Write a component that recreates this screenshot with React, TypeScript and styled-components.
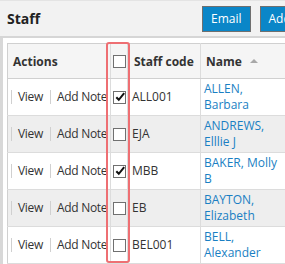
import styled, { createGlobalStyle } from 'styled-components';

const GlobalStyle = createGlobalStyle`
  body {
    margin: 0;
    background: #fff;
    font-family: "Open Sans", "Noto Sans", sans-serif;
    color: #333;
  }
`;

const Page = styled.div`
  position: relative;
  width: 285px;
  height: 264px;
  overflow: hidden;
`;

const TitleBar = styled.div`
  height: 35px;
  display: flex;
  align-items: center;
  justify-content: space-between;
  padding-left: 7px;
  background: #f2f2f2;
  border-top: 1px solid #e4e4e4;
  border-bottom: 2px solid #d6d6d6;
`;

const Title = styled.h1`
  margin: 0;
  font-size: 14px;
  font-weight: 700;
  color: #222;
`;

const Buttons = styled.div`
  display: flex;
  gap: 9px;
  flex-shrink: 0;
  width: 83px;
  overflow: hidden;
`;

const Button = styled.button`
  flex-shrink: 0;
  height: 26px;
  padding: 0 8px;
  background: #0a86c8;
  border: 1px solid #6f6f6f;
  color: #fff;
  font-family: inherit;
  font-size: 12px;
`;

const Body = styled.div`
  border-left: 3px solid #d8d8d8;
  padding: 5px 0 0 4px;
  height: 230px;
`;

const Table = styled.table`
  border-collapse: collapse;
  table-layout: fixed;
  width: 290px;
  border: 1px solid #d0d0d0;
  font-size: 12px;
`;

const Th = styled.th<{ $pad?: number }>`
  height: 34px;
  padding: 0 0 0 ${(p) => p.$pad ?? 5}px;
  text-align: left;
  font-weight: 700;
  color: #333;
  background: #f5f5f5;
  border-right: 1px solid #dcdcdc;
  border-bottom: 1px solid #d0d0d0;
  white-space: nowrap;
`;

const Row = styled.tr<{ $alt: boolean }>`
  background: ${(p) => (p.$alt ? '#eeeeee' : '#fff')};
`;

const Td = styled.td<{ $pad?: number }>`
  padding: 2px 0 2px ${(p) => p.$pad ?? 3}px;
  line-height: 16px;
  vertical-align: middle;
  border-bottom: 1px solid #dcdcdc;
  border-right: 1px solid #dcdcdc;
`;

const ActionsCell = styled(Td)`
  white-space: nowrap;
  overflow: hidden;
  letter-spacing: -0.3px;
`;

const ActionLink = styled.span`
  display: inline-block;
  line-height: 14px;
  padding: 0 7px 0 6px;
  border-left: 1px solid #d0d0d0;
  color: #333;
`;

const NameBlock = styled.div`
  width: 80px;
`;

const NameLink = styled.a`
  color: #1a7fc3;
  text-decoration: none;
`;

const SortArrow = styled.span`
  display: inline-block;
  margin-left: 8px;
  width: 0;
  height: 0;
  border-left: 4px solid transparent;
  border-right: 4px solid transparent;
  border-bottom: 4px solid #a8a8a8;
  vertical-align: 3px;
`;

const Box = styled.span`
  display: block;
  width: 11px;
  height: 11px;
  border: 1px solid #707070;
  background: #fff;
  position: relative;
  svg {
    position: absolute;
    left: 0;
    top: -1px;
  }
`;

const Highlight = styled.div`
  position: absolute;
  left: 106px;
  top: 42px;
  width: 20px;
  height: 217px;
  border: 2px solid #ee6f73;
  border-radius: 3px;
  pointer-events: none;
`;

function Check({ checked }: { checked?: boolean }) {
  return (
    <Box>
      {checked && (
        <svg width="12" height="12" viewBox="0 0 12 12">
          <path d="M2.3 6.2 L4.8 8.8 L10.2 2.2" fill="none" stroke="#111" strokeWidth="2" />
        </svg>
      )}
    </Box>
  );
}

const staff = [
  { code: 'ALL001', last: 'ALLEN,', first: 'Barbara', checked: true },
  { code: 'EJA', last: 'ANDREWS,', first: 'Elllie J', checked: false },
  { code: 'MBB', last: 'BAKER, Molly', first: 'B', checked: true },
  { code: 'EB', last: 'BAYTON,', first: 'Elizabeth', checked: false },
  { code: 'BEL001', last: 'BELL,', first: 'Alexander', checked: false },
];

export default function App() {
  return (
    <>
      <GlobalStyle />
      <Page>
        <TitleBar>
          <Title>Staff</Title>
          <Buttons>
            <Button>Email</Button>
            <Button>Add staff</Button>
          </Buttons>
        </TitleBar>
        <Body>
          <Table>
            <colgroup>
              <col style={{ width: 103 }} />
              <col style={{ width: 17 }} />
              <col style={{ width: 73 }} />
              <col style={{ width: 97 }} />
            </colgroup>
            <thead>
              <tr>
                <Th>Actions</Th>
                <Th $pad={2}>
                  <Check />
                </Th>
                <Th $pad={6}>Staff code</Th>
                <Th>
                  Name
                  <SortArrow />
                </Th>
              </tr>
            </thead>
            <tbody>
              {staff.map((s, i) => (
                <Row key={s.code} $alt={i % 2 === 1}>
                  <ActionsCell>
                    <ActionLink>View</ActionLink>
                    <ActionLink>Add Note</ActionLink>
                  </ActionsCell>
                  <Td $pad={2}>
                    <Check checked={s.checked} />
                  </Td>
                  <Td $pad={4}>{s.code}</Td>
                  <Td>
                    <NameBlock>
                      <NameLink href="#">
                        {s.last} {s.first}
                      </NameLink>
                    </NameBlock>
                  </Td>
                </Row>
              ))}
            </tbody>
          </Table>
        </Body>
        <Highlight />
      </Page>
    </>
  );
}
